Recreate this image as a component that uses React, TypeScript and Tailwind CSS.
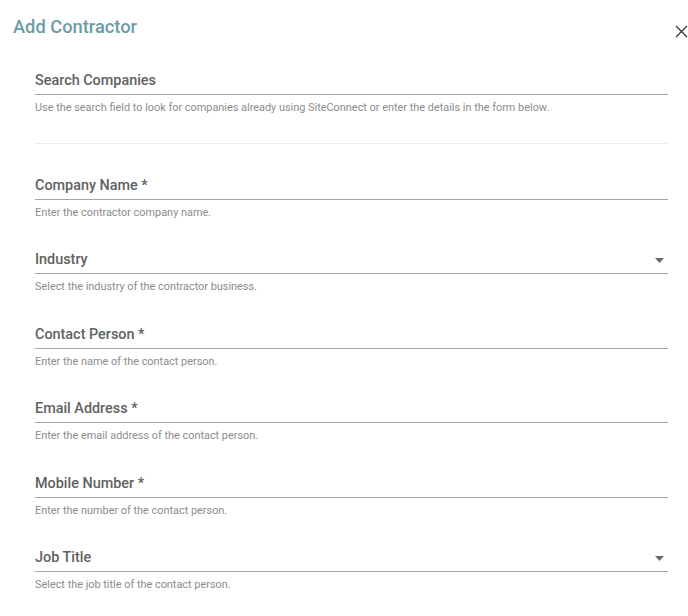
import { ReactNode } from 'react'

const FIELDS = [
  { label: 'Company Name *', help: 'Enter the contractor company name.' },
  { label: 'Industry', help: 'Select the industry of the contractor business.', select: true },
  { label: 'Contact Person *', help: 'Enter the name of the contact person.' },
  { label: 'Email Address *', help: 'Enter the email address of the contact person.' },
  { label: 'Mobile Number *', help: 'Enter the number of the contact person.' },
  { label: 'Job Title', help: 'Select the job title of the contact person.', select: true },
]

function Caret() {
  return (
    <svg width="9" height="5" viewBox="0 0 9 5" className="mb-[7px] mr-[4px]">
      <path d="M0 0h9L4.5 5z" fill="#6b6b6b" />
    </svg>
  )
}

function Field({ label, help, right }: { label: string; help: string; right?: ReactNode }) {
  return (
    <div>
      <div className="flex items-end justify-between h-[25px] border-b border-[#a3a3a3] pb-[3px]">
        <span className="text-[14.4px] leading-[20px] font-medium text-[#616161]">{label}</span>
        {right}
      </div>
      <p className="mt-[7px] text-[10.9px] leading-[12px] text-[#8c8c8c]">{help}</p>
    </div>
  )
}

export default function App() {
  return (
    <div className="w-[688px] h-[616px] bg-white overflow-hidden" style={{ fontFamily: 'Roboto, "Liberation Sans", sans-serif' }}>
      <div className="flex items-center justify-between pl-[13px] pt-[15px]">
        <h1 className="text-[18.3px] leading-[24px] font-medium text-[#6b9ca6]">Add Contractor</h1>
        <button type="button" className="mt-[8px]">
          <svg width="13" height="13" viewBox="0 0 13 13">
            <path d="M1 1l11 11M12 1L1 12" stroke="#333" strokeWidth="1.3" />
          </svg>
        </button>
      </div>

      <div className="ml-[35px] w-[633px] mt-[31px]">
        <Field
          label="Search Companies"
          help="Use the search field to look for companies already using SiteConnect or enter the details in the form below."
        />
        <div className="mt-[29px] h-px bg-[#ececec]" />
        <div className="mt-[31px] flex flex-col gap-[30.4px]">
          {FIELDS.map((f) => (
            <Field key={f.label} label={f.label} help={f.help} right={f.select ? <Caret /> : undefined} />
          ))}
        </div>
      </div>
    </div>
  )
}
